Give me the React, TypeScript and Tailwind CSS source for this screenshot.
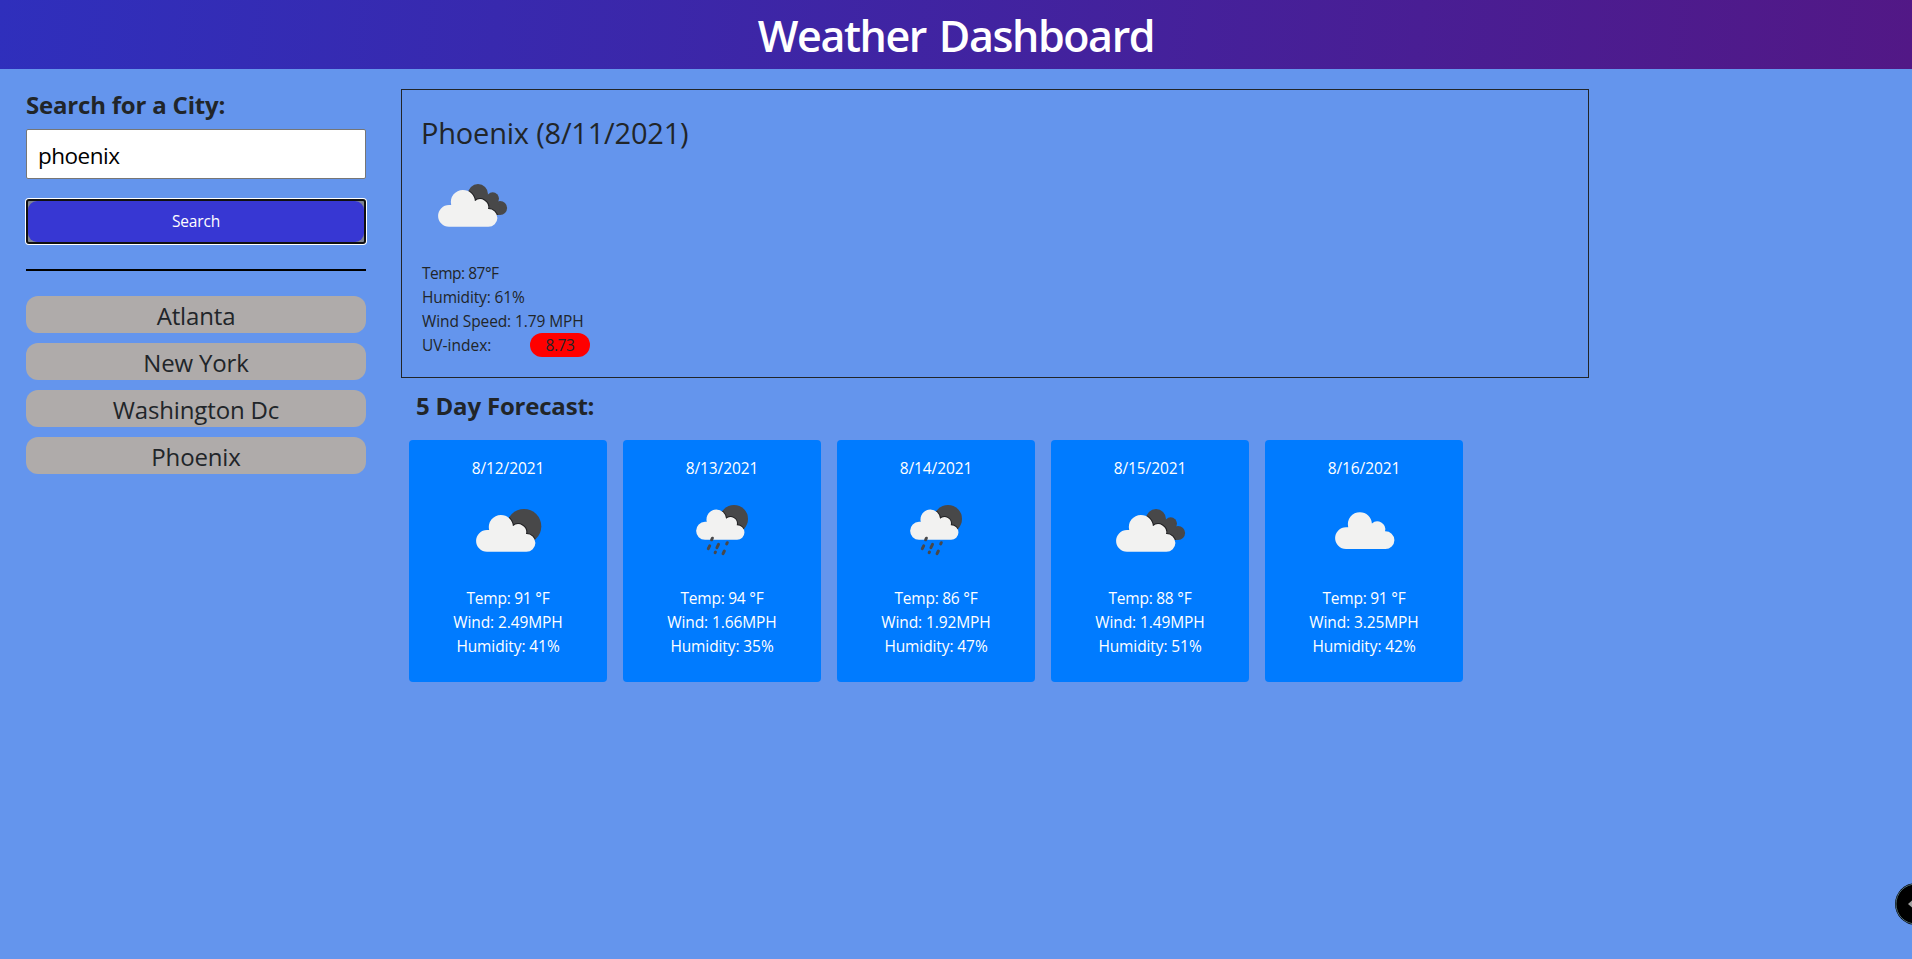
import { useId } from "react";

type Kind = "few" | "scattered" | "broken" | "rain";

const CLOUD =
  "M27 71.8a10.9 10.9 0 0 1 0-21.8h2.2A12 12 0 0 1 41 35a12 12 0 0 1 11.9 11.3A8 8 0 0 1 66 54.1a9 9 0 0 1 9.4 8.9a9 9 0 0 1-9 8.8z";

const PLACEMENT: Record<Kind, string> = {
  broken: "translate(0 0)",
  few: "translate(2 0)",
  scattered: "translate(5 -2.8)",
  rain: "translate(11 0.6) scale(0.815 0.825)",
};

const DROPS = [
  [40, 59, 0.8],
  [37, 67.3, 1.4],
  [45.7, 66, 1.6],
  [55, 63.3, 0.6],
  [43.3, 72.3, 0.3],
  [51.7, 72.3, 1.3],
];

function backdrop(kind: Kind) {
  if (kind === "few") return <circle cx="66" cy="46.3" r="17.3" />;
  if (kind === "rain") return <circle cx="62" cy="39" r="14" />;
  return (
    <>
      <circle cx="56" cy="39" r="10" />
      <circle cx="70.7" cy="43.6" r="6.3" />
      <circle cx="78" cy="53" r="7.1" />
      <path d="M50 40h24l4 13-1 7H60z" />
    </>
  );
}

function WeatherIcon({ kind }: { kind: Kind }) {
  const id = useId();
  return (
    <svg width="100" height="100" viewBox="0 0 100 100" className="block shrink-0" aria-hidden="true">
      {kind !== "scattered" && (
        <>
          <mask id={id} maskUnits="userSpaceOnUse" x="0" y="0" width="100" height="100">
            <g fill="#fff">{backdrop(kind)}</g>
          </mask>
          <g fill="#484849">{backdrop(kind)}</g>
          <g mask={`url(#${id})`}>
            <path d={CLOUD} transform={PLACEMENT[kind]} fill="#222224" stroke="#222224" strokeWidth="2.2" />
          </g>
        </>
      )}
      <path d={CLOUD} transform={PLACEMENT[kind]} fill="#f2f2f1" />
      {kind === "rain" &&
        DROPS.map(([x, y, l]) => (
          <line
            key={`${x}-${y}`}
            x1={x - l * 0.5}
            y1={y + l}
            x2={x + l * 0.5}
            y2={y - l}
            stroke="#48484a"
            strokeWidth="3"
            strokeLinecap="round"
          />
        ))}
    </svg>
  );
}

const CITIES = ["Atlanta", "New York", "Washington Dc", "Phoenix"];

const FORECAST: { date: string; kind: Kind; temp: string; wind: string; humidity: string }[] = [
  { date: "8/12/2021", kind: "few", temp: "91", wind: "2.49", humidity: "41" },
  { date: "8/13/2021", kind: "rain", temp: "94", wind: "1.66", humidity: "35" },
  { date: "8/14/2021", kind: "rain", temp: "86", wind: "1.92", humidity: "47" },
  { date: "8/15/2021", kind: "broken", temp: "88", wind: "1.49", humidity: "51" },
  { date: "8/16/2021", kind: "scattered", temp: "91", wind: "3.25", humidity: "42" },
];

export default function App() {
  return (
    <div className="relative h-[959px] w-full overflow-hidden bg-[#6495ed] font-['Open_Sans',sans-serif] text-[#212529]">
      <header className="flex h-[69px] items-start justify-center bg-[linear-gradient(95deg,#2f2fbc,#521886)] pt-[2px]">
        <h1 className="text-[43px] leading-[68px] font-semibold tracking-[-1.4px] text-white [word-spacing:3px]">
          Weather Dashboard
        </h1>
      </header>

      <div className="flex items-start">
        <aside className="w-[401px] shrink-0 pt-[21px] pr-[35px] pl-[26px]">
          <h2 className="text-[24px] leading-[29px] font-bold tracking-[-0.2px]">Search for a City:</h2>
          <input
            className="mt-[10px] block h-[50px] w-full rounded-[2px] border border-[#767676] bg-white px-[11px] pt-[2px] text-[22.5px] tracking-[-0.5px] text-black outline-none"
            defaultValue="phoenix"
          />
          <div className="mt-5 h-[45px] rounded-[3px] border-2 border-[#101010] bg-[#7d8494] ring-1 ring-white">
            <button className="block h-full w-full rounded-[9px] bg-[#3737d3] pt-px text-[15.5px] tracking-[-0.15px] text-white">
              Search
            </button>
          </div>
          <hr className="mt-[25px] border-t-2 border-black" />
          <ul className="mt-[25px] flex flex-col gap-[10px]">
            {CITIES.map((city) => (
              <li
                key={city}
                className="h-[37px] rounded-[12px] bg-[#afabaa] pt-px text-center text-[24px] leading-[38px] tracking-[-0.15px]"
              >
                {city}
              </li>
            ))}
          </ul>
        </aside>

        <main className="w-[1188px] shrink-0 pt-5">
          <section className="h-[289px] border border-[#212529] px-5 pt-[21px] text-[15.5px] leading-6">
            <h2 className="mb-px -ml-px text-[29px] leading-[43px] tracking-[-0.2px]">Phoenix (8/11/2021)</h2>
            <div className="mb-[6px]">
              <WeatherIcon kind="broken" />
            </div>
            <p className="tracking-[-0.5px]">Temp: 87°F</p>
            <p className="tracking-[-0.15px]">Humidity: 61%</p>
            <p className="tracking-[-0.1px]">Wind Speed: 1.79 MPH</p>
            <div className="flex">
              <p className="w-[108px]">UV-index:</p>
              <span className="w-[60px] rounded-[12px] bg-[#ff0000] text-center tracking-[-0.4px]">8.73</span>
            </div>
          </section>

          <h2 className="mt-[13px] pl-[15px] text-[24px] leading-[29px] font-bold tracking-[-0.2px]">5 Day Forecast:</h2>
          <div className="mt-5 flex gap-4 pl-2">
            {FORECAST.map((day) => (
              <article
                key={day.date}
                className="flex h-[242px] w-[198px] flex-col items-center rounded-[4px] bg-[#007bff] pt-4 text-[15.5px] leading-6 tracking-[-0.1px] text-white"
              >
                <p>{day.date}</p>
                <WeatherIcon kind={day.kind} />
                <p className="mt-[6px] tracking-[-0.25px]">Temp: {day.temp} °F</p>
                <p>Wind: {day.wind}MPH</p>
                <p>Humidity: {day.humidity}%</p>
              </article>
            ))}
          </div>
        </main>
      </div>

      <svg className="absolute top-[882px] right-0" width="18" height="44" viewBox="0 0 18 44" aria-hidden="true">
        <circle cx="22" cy="22" r="21" fill="#000" />
        <circle cx="22" cy="22" r="20" fill="none" stroke="#4d6a72" strokeWidth="1" />
        <path d="M14 22l4-3.6v7.2z" fill="#a0a0a0" />
      </svg>
    </div>
  );
}
